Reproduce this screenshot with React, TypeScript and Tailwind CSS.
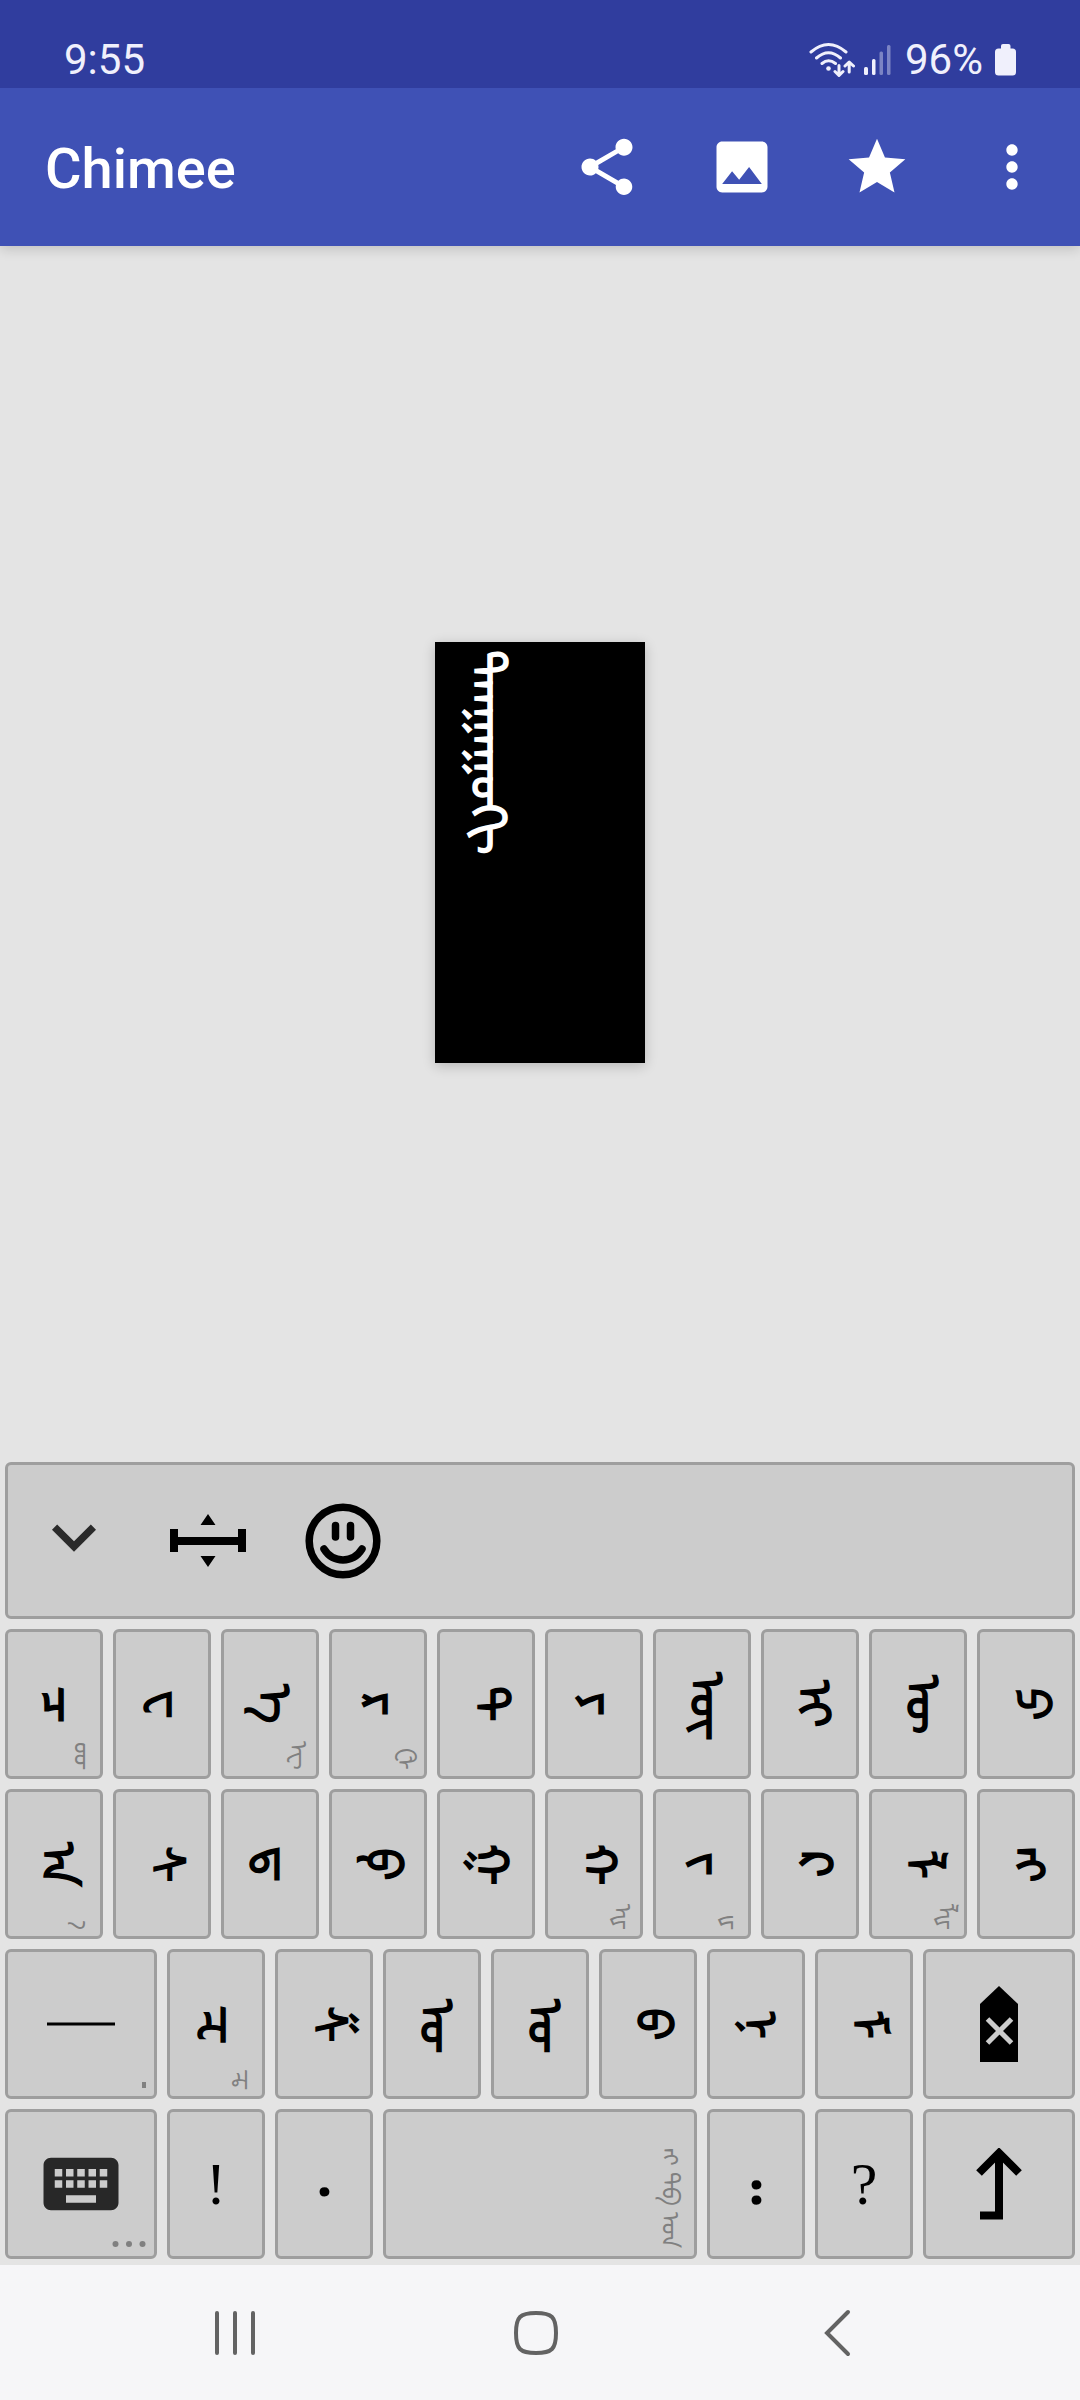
import React from 'react';
import {
  MdExpandMore,
  MdImage,
  MdKeyboard,
  MdMoreVert,
  MdShare,
  MdStar,
} from 'react-icons/md';

type KeyData = {
  label: string;
  hint?: string;
};

// \u200d keeps a letter in its joined form, \u180b picks the first variant.
const ROW_ONE: KeyData[] = [
  { label: 'ᠴ', hint: 'ᡂ' },
  { label: 'ᠸ' },
  { label: 'ᠡ', hint: 'ᠧ' },
  { label: 'ᠷ', hint: 'ᠿ' },
  { label: 'ᠲ' },
  { label: 'ᠶ' },
  { label: 'ᠦ\u200d' },
  { label: 'ᠢ' },
  { label: 'ᠥ' },
  { label: 'ᠫ' },
];

const ROW_TWO: KeyData[] = [
  { label: 'ᠠ', hint: 'ᠡ\u180b' },
  { label: 'ᠰ' },
  { label: 'ᠳ' },
  { label: 'ᠹ' },
  { label: 'ᠭ' },
  { label: 'ᠬ', hint: 'ᠾ' },
  { label: 'ᠵ', hint: 'ᡁ' },
  { label: 'ᠺ' },
  { label: 'ᠯ', hint: 'ᡀ' },
  { label: 'ᠩ' },
];

const ROW_THREE: KeyData[] = [
  { label: 'ᠽ', hint: 'ᠼ' },
  { label: 'ᠱ' },
  { label: 'ᠣ\u200d' },
  { label: 'ᠤ\u200d' },
  { label: 'ᠪ' },
  { label: 'ᠨ' },
  { label: 'ᠮ' },
];

const keyBase =
  'relative flex h-[150px] min-w-0 items-center justify-center rounded-md border-3 border-[#9e9e9e] bg-[#cccccc] text-black';

function LetterKey({ label, hint }: KeyData) {
  return (
    <button type="button" className={`${keyBase} col-span-2 pl-2`}>
      <span className="text-5xl font-bold [writing-mode:vertical-lr]">{label}</span>
      {hint && (
        <span className="absolute right-0.5 bottom-1.5 text-2xl font-medium text-[#808080] [writing-mode:vertical-lr]">
          {hint}
        </span>
      )}
    </button>
  );
}

function MarkKey({ label }: KeyData) {
  return (
    <button type="button" className={`${keyBase} col-span-2 font-['Liberation_Serif',serif] text-6xl`}>
      {label}
    </button>
  );
}

function StopKey({ label }: KeyData) {
  return (
    <button type="button" className={`${keyBase} col-span-2 pr-2`}>
      <span className="text-6xl font-bold [writing-mode:vertical-lr]">{label}</span>
    </button>
  );
}

function StatusBar() {
  return (
    <div className="z-20 flex h-[88px] items-end justify-between bg-[#303d9e] pr-16 pb-0.5 pl-16 text-[42px] leading-[52px] text-[#f0f0fc]">
      <span>9:55</span>
      <div className="flex items-center">
        <svg width="46" height="36" viewBox="0 0 46 36" fill="none" stroke="currentColor" strokeWidth="3" strokeLinecap="round" strokeLinejoin="round" aria-hidden="true">
          <path d="M2 10Q19.500-5 37 10M7.500 16Q19.500 5.500 31.500 16M13 21.500Q19.500 16 26.500 21.500" />
          <path d="M30 23.500V33M26 29.500L30 33.500L34 29.500M40.200 30V20.500M36 24L40.200 20L44.500 24" />
          <circle cx="19.500" cy="26.500" r="2.300" fill="currentColor" stroke="none" />
        </svg>
        <svg className="ml-2" width="30" height="32" viewBox="0 0 30 32" fill="currentColor" aria-hidden="true">
          <rect x="1" y="23" width="4" height="8" rx="1.500" />
          <rect x="9" y="15" width="3.500" height="16" rx="1.500" />
          <rect x="16.500" y="7.500" width="3.500" height="23.500" rx="1.500" opacity="0.4" />
          <rect x="24" y="1" width="3.500" height="30" rx="1.500" opacity="0.4" />
        </svg>
        <span className="ml-3">96%</span>
        <svg className="ml-3" width="21" height="32" viewBox="0 0 21 32" fill="currentColor" aria-hidden="true">
          <rect x="6" y="0" width="9.500" height="8" rx="2" />
          <rect x="0" y="4.500" width="21" height="27" rx="3.500" />
        </svg>
      </div>
    </div>
  );
}

function AppBar() {
  return (
    <header className="z-10 flex h-[158px] items-center justify-between bg-[#3f51b5] pr-px pl-[45px] text-white shadow-[0_3px_12px_rgba(0,0,0,0.16)]">
      <h1 className="pt-1 text-[56px] leading-16 font-medium">Chimee</h1>
      <div className="flex">
        <button type="button" aria-label="Share" className="flex h-34 w-[135px] items-center justify-center">
          <MdShare size={68} />
        </button>
        <button type="button" aria-label="Photo" className="flex h-34 w-[135px] items-center justify-center">
          <MdImage size={68} />
        </button>
        <button type="button" aria-label="Favorites" className="flex h-34 w-[135px] items-center justify-center">
          <MdStar size={68} />
        </button>
        <button type="button" aria-label="More options" className="flex h-34 w-[135px] items-center justify-center">
          <MdMoreVert size={68} />
        </button>
      </div>
    </header>
  );
}

function KeyboardTools() {
  return (
    <div className="flex h-[157px] items-center rounded-md border-3 border-[#9e9e9e] bg-[#cccccc] text-black">
      <button type="button" aria-label="Hide keyboard" className="flex w-33 justify-center pb-2 text-[#2a2a2a]">
        <MdExpandMore size={88} />
      </button>
      <button type="button" aria-label="Move cursor" className="flex w-[135px] justify-center">
        <svg width="76" height="54" viewBox="0 0 76 54" fill="currentColor">
          <path d="M38 0L45.500 11H30.500ZM38 53L45.500 42H30.500Z" />
          <path d="M0 15H8V23H68V15H76V38H68V31H8V38H0Z" />
        </svg>
      </button>
      <button type="button" aria-label="Emoji" className="flex w-[135px] justify-center">
        <svg width="76" height="76" viewBox="0 0 76 76" fill="none" stroke="currentColor" strokeLinecap="round">
          <circle cx="38" cy="38" r="33.800" strokeWidth="7.500" />
          <path d="M30.500 22.500V34M45.500 22.500V34M19 46C28 60.500 48 60.500 57 46" strokeWidth="7.500" />
        </svg>
      </button>
    </div>
  );
}

function Keyboard() {
  return (
    <section aria-label="Keyboard" className="flex flex-col gap-2.5 px-[5px] pb-1.5">
      <KeyboardTools />
      <div className="-mx-[5px] grid grid-cols-[repeat(20,minmax(0,1fr))] gap-y-2.5 [&>button]:mx-[5px]">
        {ROW_ONE.map((key) => (
          <LetterKey key={key.label} {...key} />
        ))}
        {ROW_TWO.map((key) => (
          <LetterKey key={key.label} {...key} />
        ))}

        <button type="button" aria-label="Connector" className={`${keyBase} col-span-3`}>
          <svg width="68" height="4" viewBox="0 0 68 4">
            <rect y="0.500" width="68" height="3" />
          </svg>
          <svg className="absolute right-2 bottom-2" width="4" height="6" viewBox="0 0 4 6" fill="#808080">
            <rect width="4" height="6" />
          </svg>
        </button>
        {ROW_THREE.map((key) => (
          <LetterKey key={key.label} {...key} />
        ))}
        <button type="button" aria-label="Delete" className={`${keyBase} col-span-3`}>
          <svg width="38" height="76" viewBox="0 0 38 76">
            <path d="M19 0L38 18V76H0V18Z" />
            <path d="M7.500 33L31.500 57M31.500 33L7.500 57" stroke="#cccccc" strokeWidth="5" />
          </svg>
        </button>

        <button type="button" aria-label="Switch keyboard" className={`${keyBase} col-span-3`}>
          <MdKeyboard size={90} className="text-[#282828]" />
          <svg className="absolute right-2 bottom-2" width="34" height="8" viewBox="0 0 34 8" fill="#808080">
            <circle cx="3.500" cy="4" r="3" />
            <circle cx="17" cy="4" r="3" />
            <circle cx="30.500" cy="4" r="3" />
          </svg>
        </button>
        <MarkKey label="!" />
        <StopKey label="᠂" />
        <button type="button" aria-label="Space" className={`${keyBase} col-span-6`}>
          <span className="absolute right-2 bottom-2 text-2xl font-medium text-[#808080] [writing-mode:vertical-lr]">
            ᠩ ᠳᠪ ᠤᠨ
          </span>
        </button>
        <StopKey label="᠃" />
        <MarkKey label="?" />
        <button type="button" aria-label="Return" className={`${keyBase} col-span-3`}>
          <svg width="46" height="72" viewBox="0 0 46 72" fill="none" stroke="black" strokeWidth="8">
            <path d="M3 25L23 5L43 25" />
            <path d="M23 6V67.500H4" />
          </svg>
        </button>
      </div>
    </section>
  );
}

function NavigationBar() {
  return (
    <nav className="grid h-[135px] grid-cols-3 items-center bg-[#f6f6f8] pr-[92px] pl-[84px] text-[#636363]">
      <button type="button" aria-label="Recents" className="flex justify-center">
        <svg width="42" height="46" viewBox="0 0 42 46" stroke="currentColor" strokeWidth="4" strokeLinecap="round">
          <path d="M3 3V43M21 3V43M39 3V43" />
        </svg>
      </button>
      <button type="button" aria-label="Home" className="flex justify-center">
        <svg width="46" height="46" viewBox="0 0 46 46" fill="none" stroke="currentColor" strokeWidth="4">
          <path d="M23 3C39 3 43 7 43 23S39 43 23 43S3 39 3 23S7 3 23 3Z" />
        </svg>
      </button>
      <button type="button" aria-label="Back" className="flex justify-center">
        <svg width="28" height="48" viewBox="0 0 28 48" fill="none" stroke="currentColor" strokeWidth="4" strokeLinecap="round">
          <path d="M25 3L4 24L25 45" />
        </svg>
      </button>
    </nav>
  );
}

export default function App() {
  return (
    <div className="flex min-h-screen flex-col bg-[#e4e4e4] font-[Roboto,'Noto_Sans',sans-serif]">
      <StatusBar />
      <AppBar />
      <main className="flex flex-1 items-center justify-center pb-1">
        <div className="h-[421px] w-[210px] bg-black px-7 py-2 text-white shadow-[0_3px_12px_rgba(0,0,0,0.2)]">
          <p className="text-5xl font-bold [writing-mode:vertical-lr]">ᠲᠠᠠᠭᠠᠭᠣᠭᠢ</p>
        </div>
      </main>
      <Keyboard />
      <NavigationBar />
    </div>
  );
}
